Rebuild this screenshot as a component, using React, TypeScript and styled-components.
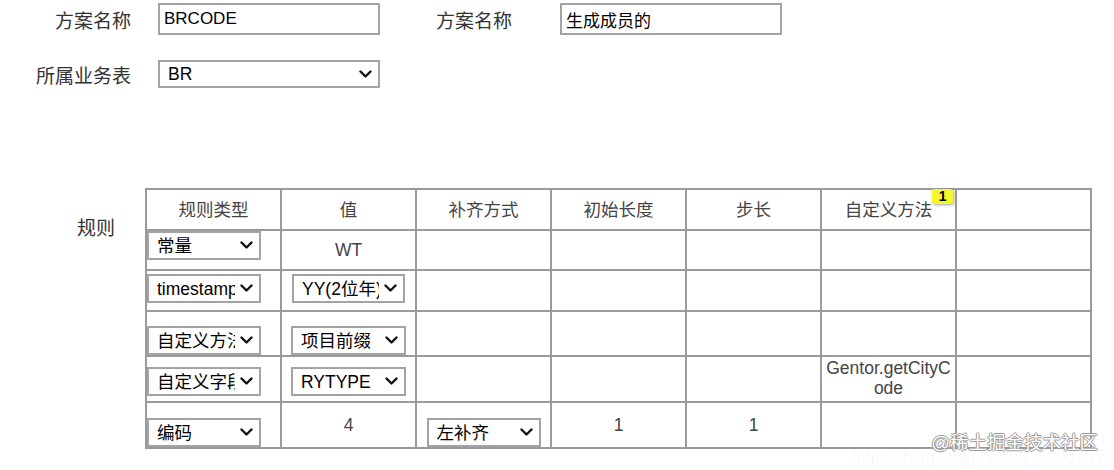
import React from 'react';
import styled, { createGlobalStyle } from 'styled-components';

const GlobalStyle = createGlobalStyle`
  html, body {
    margin: 0;
    padding: 0;
    background: #fff;
  }
  body {
    font-family: "Liberation Sans", "Noto Sans CJK SC", sans-serif;
    color: #333;
    overflow: hidden;
  }
`;

const Page = styled.div`
  position: relative;
  width: 1114px;
  height: 470px;
  padding-top: 3px;
  box-sizing: border-box;
`;

const FieldRow = styled.div<{ $height: number; $after?: number }>`
  display: flex;
  align-items: center;
  height: ${(p) => p.$height}px;
  margin-bottom: ${(p) => p.$after ?? 0}px;
`;

const Label = styled.label<{ $width: number; $lead?: number; $trail: number }>`
  width: ${(p) => p.$width}px;
  margin-left: ${(p) => p.$lead ?? 0}px;
  margin-right: ${(p) => p.$trail}px;
  padding-top: 6px;
  text-align: right;
  font-size: 19px;
  line-height: 22px;
  color: #333;
  white-space: nowrap;
`;

const TextInput = styled.input`
  box-sizing: border-box;
  width: 222px;
  height: 32px;
  margin: 0;
  padding: 0 4px;
  border: 2px solid #a3a3a3;
  font-family: inherit;
  font-size: 17px;
  color: #000;
  background: #fff;
  outline: none;
`;

const SelectBox = styled.div<{ $width: number; $height: number; $offset?: number }>`
  box-sizing: border-box;
  display: inline-flex;
  align-items: center;
  width: ${(p) => p.$width}px;
  height: ${(p) => p.$height}px;
  margin-top: ${(p) => p.$offset ?? 0}px;
  padding: 0 6px 0 8px;
  border: 2px solid #a3a3a3;
  background: #fff;
  color: #000;
  font-size: 17.5px;
  vertical-align: top;
`;

const SelectText = styled.span`
  flex: 1;
  overflow: hidden;
  white-space: nowrap;
  text-align: left;
  line-height: 20px;
`;

const Chevron = styled.svg`
  flex: none;
  width: 13px;
  height: 9px;
  margin-left: 5px;
`;

const Select: React.FC<{ value: string; width?: number; height?: number; offset?: number }> = ({
  value,
  width = 114,
  height = 29,
  offset,
}) => (
  <SelectBox $width={width} $height={height} $offset={offset}>
    <SelectText>{value}</SelectText>
    <Chevron viewBox="0 0 13 9">
      <path d="M1.5 1.5 L6.5 6.5 L11.5 1.5" fill="none" stroke="#111" strokeWidth="2.4" strokeLinecap="round" strokeLinejoin="round" />
    </Chevron>
  </SelectBox>
);

const RulesSection = styled.section`
  display: flex;
  align-items: flex-start;
  margin-top: 100px;
  padding-left: 77px;
`;

const RulesLabel = styled.div`
  width: 68px;
  padding-top: 30px;
  font-size: 19px;
  line-height: 22px;
  color: #333;
`;

const Table = styled.table`
  width: 947px;
  table-layout: fixed;
  border-collapse: collapse;
  border: 2px solid #9a9a9a;
  font-size: 17.5px;
`;

const Row = styled.tr<{ $height: number }>`
  height: ${(p) => p.$height}px;
`;

const HeadCell = styled.th`
  padding: 0;
  border: 2px solid #9a9a9a;
  font-weight: normal;
  color: #444;
  text-align: center;
  vertical-align: middle;
  line-height: 20px;
`;

const Cell = styled.td<{ $align?: 'left' | 'center'; $valign?: 'top' | 'middle' }>`
  padding: 0;
  border: 2px solid #9a9a9a;
  text-align: ${(p) => p.$align ?? 'center'};
  vertical-align: ${(p) => p.$valign ?? 'top'};
  color: #444;
  line-height: 20px;
`;

const CellText = styled.div<{ $offset?: number }>`
  margin-top: ${(p) => p.$offset ?? 0}px;
  padding: 0 2px;
  word-break: break-all;
`;

const HeadWithBadge = styled.span`
  position: relative;
`;

const Badge = styled.span`
  position: absolute;
  left: 100%;
  top: -11px;
  width: 21px;
  height: 15px;
  background: #f7f72e;
  color: #000;
  font-size: 14px;
  font-weight: bold;
  line-height: 15px;
  text-align: center;
  border-radius: 2px;
  box-shadow: 1px 1px 3px rgba(0, 0, 0, 0.35);
`;

const Watermark = styled.div`
  position: absolute;
  right: 16px;
  bottom: 16px;
  font-size: 18.5px;
  line-height: 22px;
  color: #fff;
  text-shadow: -1px 0 #9a9a9a, 1px 0 #9a9a9a, 0 1px #9a9a9a, 0 -1px #9a9a9a;
  white-space: nowrap;
`;

const WatermarkUrl = styled.div`
  position: absolute;
  right: 8px;
  bottom: 3px;
  font-size: 17px;
  color: rgba(0, 0, 0, 0.04);
  white-space: nowrap;
`;

const headers = ['规则类型', '值', '补齐方式', '初始长度', '步长'];

export default function App() {
  return (
    <Page>
      <GlobalStyle />
      <FieldRow $height={32} $after={25}>
        <Label $width={131} $trail={27}>方案名称</Label>
        <TextInput readOnly value="BRCODE" />
        <Label $width={76} $lead={56} $trail={48}>方案名称</Label>
        <TextInput readOnly value="生成成员的" />
      </FieldRow>
      <FieldRow $height={28}>
        <Label $width={131} $trail={27}>所属业务表</Label>
        <Select value="BR" width={222} height={28} />
      </FieldRow>

      <RulesSection>
        <RulesLabel>规则</RulesLabel>
        <Table>
          <thead>
            <Row $height={41}>
              {headers.map((h) => (
                <HeadCell key={h}>{h}</HeadCell>
              ))}
              <HeadCell>
                <HeadWithBadge>
                  自定义方法
                  <Badge>1</Badge>
                </HeadWithBadge>
              </HeadCell>
              <HeadCell />
            </Row>
          </thead>
          <tbody>
            <Row $height={40}>
              <Cell $align="left"><Select value="常量" /></Cell>
              <Cell $valign="middle">WT</Cell>
              <Cell /><Cell /><Cell /><Cell /><Cell />
            </Row>
            <Row $height={41}>
              <Cell $align="left"><Select value="timestamp" offset={3} /></Cell>
              <Cell><Select value="YY(2位年)" width={113} offset={3} /></Cell>
              <Cell /><Cell /><Cell /><Cell /><Cell />
            </Row>
            <Row $height={45}>
              <Cell $align="left"><Select value="自定义方法" offset={14} /></Cell>
              <Cell><Select value="项目前缀" width={115} offset={14} /></Cell>
              <Cell /><Cell /><Cell /><Cell /><Cell />
            </Row>
            <Row $height={46}>
              <Cell $align="left"><Select value="自定义字段" offset={10} /></Cell>
              <Cell><Select value="RYTYPE" width={115} offset={10} /></Cell>
              <Cell /><Cell /><Cell />
              <Cell><CellText $offset={1}>Gentor.getCityCode</CellText></Cell>
              <Cell />
            </Row>
            <Row $height={45}>
              <Cell $align="left"><Select value="编码" offset={15} /></Cell>
              <Cell><CellText $offset={12}>4</CellText></Cell>
              <Cell><Select value="左补齐" offset={15} /></Cell>
              <Cell><CellText $offset={12}>1</CellText></Cell>
              <Cell><CellText $offset={12}>1</CellText></Cell>
              <Cell /><Cell />
            </Row>
          </tbody>
        </Table>
      </RulesSection>

      <WatermarkUrl>https://blog.csdn.net/qq_40001fxk</WatermarkUrl>
      <Watermark>@稀土掘金技术社区</Watermark>
    </Page>
  );
}
